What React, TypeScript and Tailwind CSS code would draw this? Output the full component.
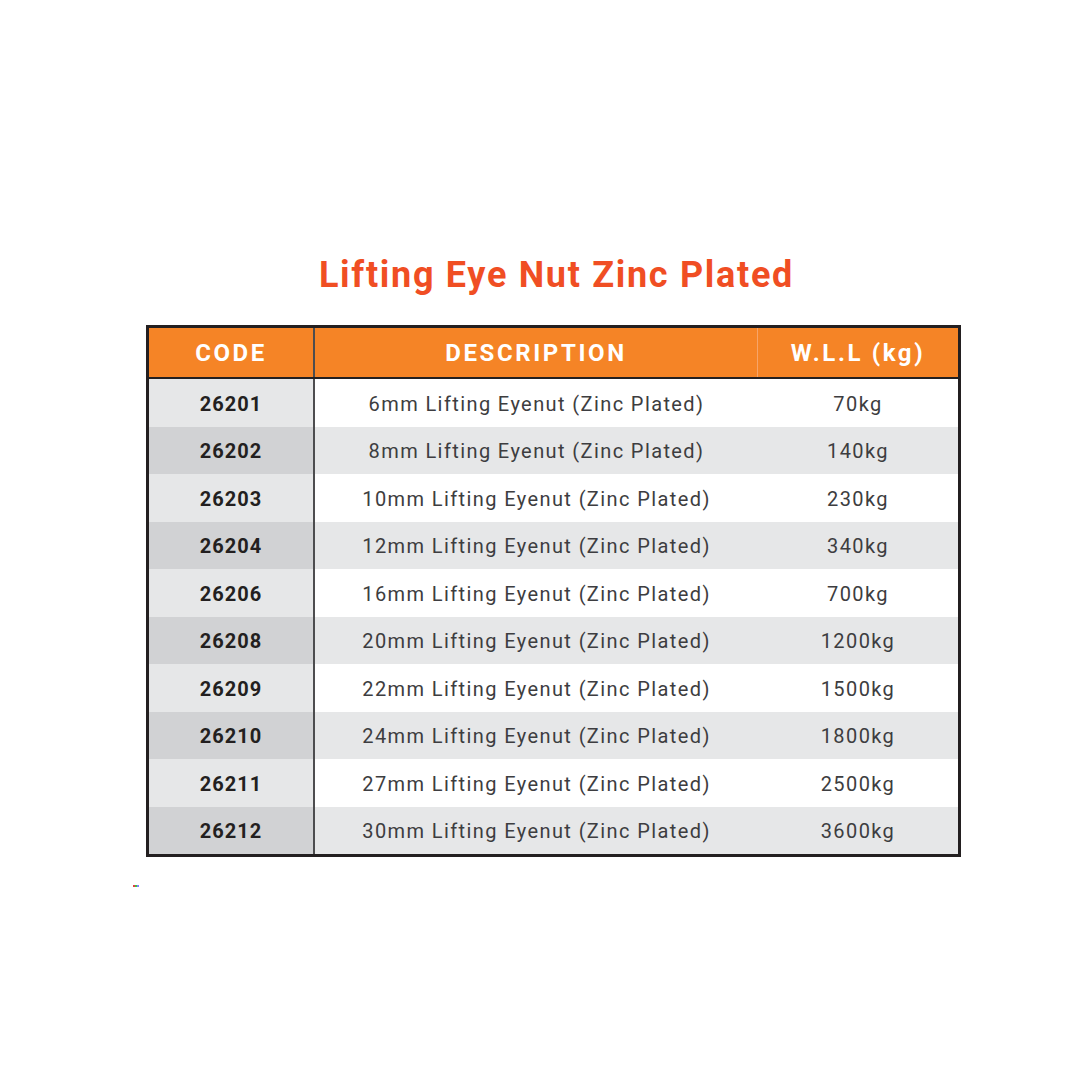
import React from "react";

const rows = [
  ["26201", "6mm Lifting Eyenut (Zinc Plated)", "70kg"],
  ["26202", "8mm Lifting Eyenut (Zinc Plated)", "140kg"],
  ["26203", "10mm Lifting Eyenut (Zinc Plated)", "230kg"],
  ["26204", "12mm Lifting Eyenut (Zinc Plated)", "340kg"],
  ["26206", "16mm Lifting Eyenut (Zinc Plated)", "700kg"],
  ["26208", "20mm Lifting Eyenut (Zinc Plated)", "1200kg"],
  ["26209", "22mm Lifting Eyenut (Zinc Plated)", "1500kg"],
  ["26210", "24mm Lifting Eyenut (Zinc Plated)", "1800kg"],
  ["26211", "27mm Lifting Eyenut (Zinc Plated)", "2500kg"],
  ["26212", "30mm Lifting Eyenut (Zinc Plated)", "3600kg"],
];

export default function App() {
  return (
    <div
      className="w-[1080px] h-[1080px] bg-white flex flex-col"
      style={{ fontFamily: "Roboto, 'Liberation Sans', sans-serif" }}
    >
      <div className="pt-[253px] pl-[146px] w-[961px] flex justify-center">
        <h1 className="text-[36px] leading-[44px] font-bold text-[#f04e23] tracking-[1.7px] pl-[6px]">
          Lifting Eye Nut Zinc Plated
        </h1>
      </div>
      <div className="ml-[146px] mt-[28px] w-[815px] border-[3px] border-[#231f20] flex flex-col">
        <div className="flex h-[51px] bg-[#f58426] border-b-[2px] border-[#231f20] text-white font-bold text-[24px] tracking-[2.6px]">
          <div className="w-[166px] flex items-center justify-center border-r-[2px] border-[#4d4d4f]">CODE</div>
          <div className="w-[443px] flex items-center justify-center border-r border-[#f7a468]">DESCRIPTION</div>
          <div className="flex-1 flex items-center justify-center">W.L.L (kg)</div>
        </div>
        {rows.map((r, i) => {
          const even = i % 2 === 1;
          return (
            <div key={r[0]} className="flex h-[47.5px] text-[20px] font-normal text-[#3d3d40] tracking-[1.4px]">
              <div
                className={`w-[166px] flex items-center justify-center pt-[2px] font-bold tracking-[1px] text-[#231f20] border-r-[2px] border-[#4d4d4f] ${even ? "bg-[#d1d2d4]" : "bg-[#e6e7e8]"}`}
              >
                {r[0]}
              </div>
              <div className={`w-[443px] flex items-center justify-center pt-[2px] ${even ? "bg-[#e6e7e8]" : "bg-white"}`}>
                {r[1]}
              </div>
              <div className={`flex-1 flex items-center justify-center pt-[2px] ${even ? "bg-[#e6e7e8]" : "bg-white"}`}>
                {r[2]}
              </div>
            </div>
          );
        })}
      </div>
      <div className="ml-[133px] mt-[28px] flex h-[2px] w-[6px]">
        <div className="w-[2px] bg-[#e04040]" />
        <div className="w-[2px] bg-[#40c040]" />
        <div className="w-[2px] bg-[#8080ff]" />
      </div>
    </div>
  );
}
